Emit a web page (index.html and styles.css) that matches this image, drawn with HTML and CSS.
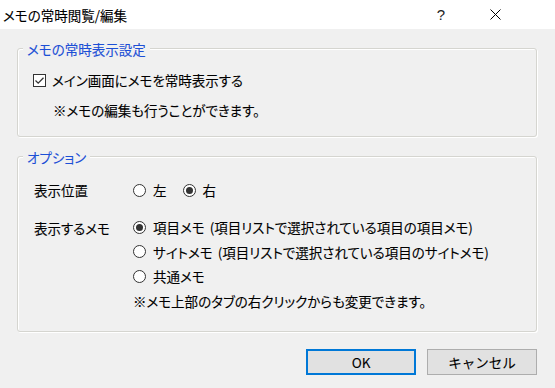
FILE: index.html
```html
<!DOCTYPE html>
<html lang="ja">
<head>
    <meta charset="UTF-8">
    <meta name="viewport" content="width=device-width, initial-scale=1.0">
    <title>メモの常時閲覧/編集</title>
    <link rel="stylesheet" href="styles.css">
</head>
<body>
    <div class="titlebar">
        <span class="title">メモの常時閲覧/編集</span>
        <span class="help">?</span>
        <span class="close">
            <svg width="11" height="11" viewBox="0 0 11 11"><path d="M0.5 0.5 L10.5 10.5 M10.5 0.5 L0.5 10.5" stroke="#000" stroke-width="1" fill="none"/></svg>
        </span>
    </div>

    <div class="content">
        <div class="group group-display">
            <div class="group-title">メモの常時表示設定</div>
            <div class="check-row">
                <span class="checkbox">
                    <svg width="11" height="11" viewBox="0 0 11 11"><path d="M1.5 5.5 L4.2 8.2 L9.5 2.8" stroke="#333" stroke-width="1.3" fill="none"/></svg>
                </span>
                <span>メイン画面にメモを常時表示する</span>
            </div>
            <div class="note note-display">※メモの編集も行うことができます。</div>
        </div>

        <div class="group group-options">
            <div class="group-title">オプション</div>
            <div class="option-grid">
                <div class="option-label">表示位置</div>
                <div class="radio-inline">
                    <span class="radio"></span><span class="radio-text">左</span>
                    <span class="radio checked"></span><span class="radio-text">右</span>
                </div>

                <div class="option-label label-memo">表示するメモ</div>
                <div class="radio-list">
                    <div class="radio-row"><span class="radio checked"></span><span class="radio-text">項目メモ (項目リストで選択されている項目の項目メモ)</span></div>
                    <div class="radio-row"><span class="radio"></span><span class="radio-text">サイトメモ (項目リストで選択されている項目のサイトメモ)</span></div>
                    <div class="radio-row"><span class="radio"></span><span class="radio-text">共通メモ</span></div>
                    <div class="radio-row note">※メモ上部のタブの右クリックからも変更できます。</div>
                </div>
            </div>
        </div>

        <div class="buttons">
            <button class="btn btn-default">OK</button>
            <button class="btn">キャンセル</button>
        </div>
    </div>
</body>
</html>
```

FILE: styles.css
```css
body {
    margin: 0;
    width: 555px;
    height: 388px;
    overflow: hidden;
    background-color: #f0f0f0;
    font-family: "Noto Sans CJK JP", "Noto Sans", sans-serif;
    font-size: 13.5px;
    font-feature-settings: "palt";
    -webkit-text-stroke: 0.1px currentColor; /* a touch darker, closer to ClearType */
    color: #000;
}
.titlebar {
    height: 29px;
    background-color: #fff;
    display: flex;
    align-items: center;
}
.title {
    flex: 1;
    padding-left: 3px;
}
.help {
    width: 46px;
    text-align: center;
    font-family: "Liberation Sans", sans-serif;
    font-size: 15px;
    color: #222;
    -webkit-text-stroke: 0;
}
.close {
    width: 46px;
    margin-left: 8px;
    margin-right: 37px;
    display: flex;
    justify-content: center;
}
.content {
    padding: 0 18px 0 17px;
}
.group {
    position: relative;
    box-sizing: border-box;
    border: 1px solid #d5d5d0;
    border-radius: 3px;
    box-shadow: 1px 1px 0 #fff, inset 1px 1px 0 #fff;
}
.group-title {
    position: absolute; /* sits over the top border */
    top: -9px;
    left: 5px;
    padding: 0 4px;
    background-color: #f0f0f0;
    color: #1c4fd6;
    line-height: 18px;
}
.group-display {
    margin-top: 19px;
    height: 89px;
    padding: 21px 0 0 15px;
}
.check-row {
    display: flex;
    align-items: center;
    height: 20px;
}
.checkbox {
    box-sizing: border-box;
    width: 13px;
    height: 13px;
    border: 1px solid #333;
    background-color: #fff;
    margin-right: 6px;
    display: flex;
    align-items: center;
    justify-content: center;
}
.note-display {
    margin-top: 10px;
    margin-left: 20px;
    line-height: 20px;
}
.group-options {
    margin-top: 19px;
    height: 176px;
    padding: 21px 0 0 16px;
}
.option-grid {
    display: grid;
    grid-template-columns: 99px 1fr;
    row-gap: 13px;
}
.option-label {
    line-height: 24px;
}
.label-memo {
    margin-top: 1px;
}
.radio-inline {
    display: flex;
    align-items: center;
    height: 24px;
}
.radio {
    box-sizing: border-box;
    width: 13px;
    height: 13px;
    border: 1px solid #333;
    border-radius: 50%;
    background-color: #fff;
    margin-right: 7px;
    position: relative;
    flex: none;
}
.radio.checked::after {
    content: "";
    position: absolute;
    left: 2px;
    top: 2px;
    width: 7px;
    height: 7px;
    border-radius: 50%;
    background-color: #333;
}
.radio-inline .radio-text {
    margin-right: 16px;
}
.radio-text {
    word-spacing: 2px;
}
.radio-row {
    display: flex;
    align-items: center;
    height: 24.5px;
}
.buttons {
    display: flex;
    justify-content: flex-end;
    gap: 11px;
    margin-top: 17px;
}
.btn {
    box-sizing: border-box;
    width: 110px;
    height: 26px;
    border: 1px solid #adadad;
    background-color: #e1e1e1;
    font-family: inherit;
    font-size: 13.5px;
    color: #000;
    padding: 0;
}
.btn-default {
    border: 2px solid #0078d7;
}
```
